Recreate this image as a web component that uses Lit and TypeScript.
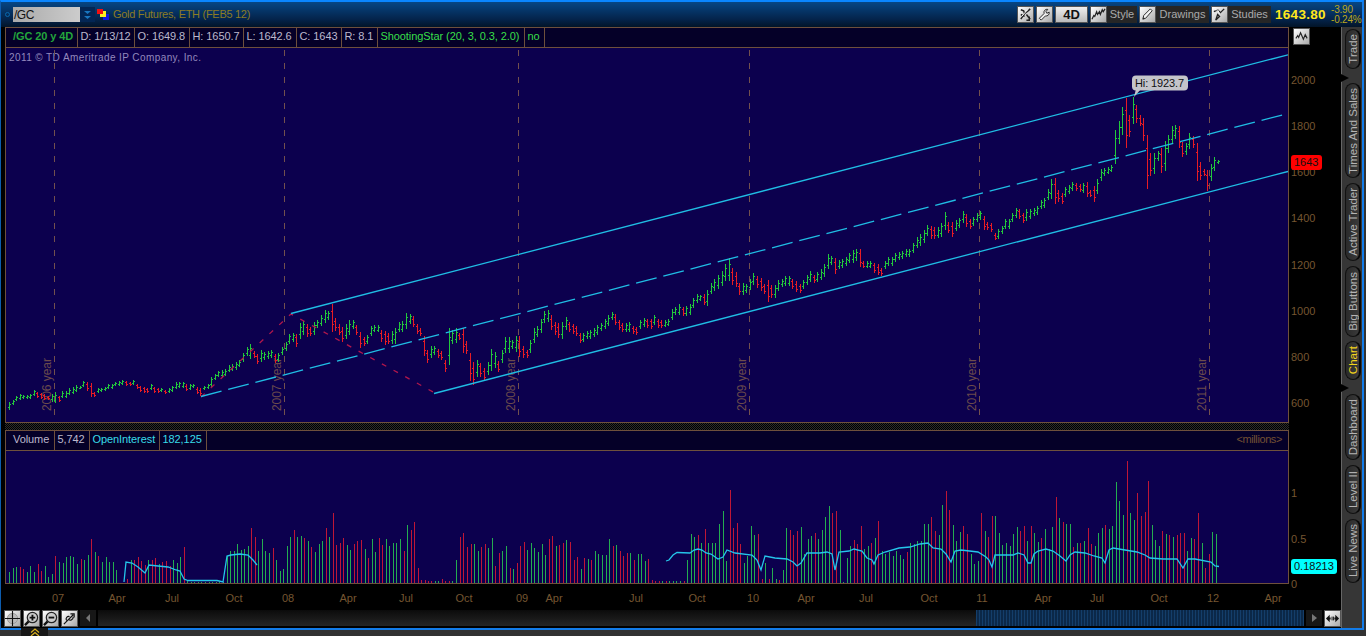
import { LitElement, html, css, svg } from 'lit';
import { customElement, property } from 'lit/decorators.js';

// price bars: x, high, low (chart pixels, y grows downwards)
const PRICES: number[][] = [
  [9,402,409],[12,400,404],[16,396,400],[20,394,399],[24,395,398],[31,394,398],[34,390,395],[38,392,397],[45,394,399],
  [49,396,399],[54,392,402],[57,399,404],[60,396,401],[64,391,397],[70,388,394],[75,385,391],[80,386,388],[85,381,386],
  [88,382,390],[91,383,396],[94,392,396],[97,388,392],[104,387,390],[110,384,388],[116,382,385],[122,380,384],[128,382,385],
  [132,380,384],[135,384,388],[140,386,391],[146,388,392],[150,384,389],[155,387,392],[160,388,391],[166,390,393],
  [172,386,391],[177,382,388],[181,382,387],[186,384,390],[192,384,387],[197,387,393],[200,388,395],[204,386,389],
  [208,384,388],[211,377,386],[214,374,379],[219,371,376],[224,369,375],[230,365,371],[235,362,369],[240,360,366],
  [244,353,361],[248,347,355],[251,344,358],[254,351,357],[257,354,363],[261,350,361],[265,352,359],[270,350,357],
  [274,354,362],[277,353,361],[281,347,354],[285,342,350],[289,334,343],[293,333,341],[297,334,346],[301,323,338],
  [304,321,334],[308,324,336],[312,327,335],[315,322,334],[319,320,327],[323,310,322],[327,311,319],[330,309,315],
  [332,304,331],[336,318,330],[340,324,334],[343,327,341],[348,320,334],[352,320,328],[355,325,334],[360,332,347],
  [364,337,345],[368,335,343],[371,326,335],[376,325,331],[380,330,341],[385,331,344],[389,333,343],[394,328,343],
  [397,322,330],[401,321,331],[404,319,329],[407,313,328],[410,314,323],[413,316,326],[417,324,333],[421,328,335],
  [424,336,355],[428,350,362],[432,346,357],[436,346,354],[440,351,359],[445,360,371],[449,328,364],[453,330,343],
  [457,328,342],[460,333,339],[463,328,352],[467,341,353],[471,353,380],[474,362,384],[478,360,376],[482,363,376],
  [485,368,380],[489,362,374],[492,349,370],[495,352,367],[499,361,371],[503,350,362],[507,337,352],[511,340,348],
  [514,335,346],[519,336,356],[523,346,357],[526,350,357],[529,340,352],[532,328,342],[537,326,336],[541,319,332],
  [545,311,322],[549,310,321],[552,315,329],[556,322,334],[559,323,337],[562,322,338],[566,317,329],[570,322,331],
  [575,326,335],[578,333,342],[582,333,341],[585,330,342],[588,331,338],[592,330,338],[597,325,334],[602,323,330],
  [607,315,325],[612,312,319],[616,314,324],[620,320,329],[624,323,331],[628,322,331],[632,326,333],[636,327,334],
  [640,320,328],[645,318,326],[650,319,328],[653,315,324],[657,319,327],[662,320,327],[668,319,325],[672,309,319],
  [676,307,314],[680,304,314],[684,307,315],[689,304,314],[692,298,307],[696,294,302],[701,295,300],[705,294,304],
  [708,290,305],[712,283,293],[716,279,290],[720,271,285],[725,264,280],[727,262,280],[730,258,280],[733,268,284],
  [737,272,286],[741,283,294],[745,284,292],[749,279,289],[754,273,284],[759,278,290],[763,284,293],[766,282,291],
  [769,280,301],[773,285,297],[778,280,290],[783,279,286],[787,276,285],[792,279,288],[797,281,291],[801,284,292],
  [806,275,284],[811,271,281],[815,275,282],[820,269,279],[825,264,276],[828,254,268],[832,256,264],[835,258,273],
  [840,260,268],[844,257,265],[849,253,262],[854,250,262],[858,249,260],[861,249,266],[865,261,267],[869,261,267],
  [873,263,272],[878,264,274],[881,268,275],[886,261,268],[890,257,265],[895,253,261],[900,252,259],[905,249,256],
  [908,249,256],[912,243,252],[917,237,247],[922,230,242],[926,225,235],[929,221,234],[932,226,238],[937,227,237],
  [941,223,236],[944,212,229],[948,222,232],[951,222,236],[954,220,230],[958,218,227],[961,211,222],[965,214,226],
  [969,219,228],[973,217,225],[977,213,221],[979,211,219],[982,216,229],[986,222,229],[990,223,231],[994,233,239],
  [999,229,238],[1003,226,233],[1007,219,228],[1012,213,221],[1017,208,217],[1021,209,218],[1024,213,222],[1028,209,220],
  [1032,208,215],[1036,206,214],[1040,200,208],[1044,198,207],[1048,189,199],[1052,179,198],[1055,178,203],[1059,190,201],
  [1063,193,203],[1067,187,196],[1072,182,190],[1076,183,190],[1080,184,191],[1085,183,192],[1088,182,196],[1091,190,196],
  [1094,186,201],[1098,179,193],[1102,169,180],[1106,168,175],[1110,165,171],[1113,153,169],[1116,130,163],[1120,121,143],
  [1124,107,134],[1127,98,147],[1130,115,136],[1133,97,123],[1137,105,122],[1141,115,125],[1144,118,140],[1147,135,188],
  [1151,153,175],[1155,153,173],[1159,151,160],[1163,148,172],[1166,141,170],[1169,135,152],[1172,126,143],[1176,125,138],
  [1179,126,147],[1183,142,156],[1187,143,154],[1190,133,148],[1194,136,147],[1197,143,180],[1201,162,179],[1205,169,175],
  [1209,170,190],[1211,164,180],[1215,157,170],[1218,160,163],
];

// runs of evenly spaced volume bars; a negative height is a down bar
const VOLUMES: { from: number; to: number; bars: number[] }[] = [
  { from: 9, to: 116.3, bars: [11,15,16,-16,-14,11,17,11,-19,-12,17,6,9,-27,21,20,26,27,26,19,-24,23,28,-44,31,-27,21,26,21,21,13] },
  { from: 127, to: 183.7, bars: [-4,23,-23,-26,-22,-18,23,-23,-25,19,-21,-22,-17,23,20,26,-36] },
  { from: 187, to: 223, bars: [2,1,1,1,1,1,1,1,1,1,1] },
  {
    from: 226.5, to: 421.2,
    bars: [27,32,32,39,33,34,37,-55,-46,32,44,32,30,-35,23,12,14,37,46,-53,46,47,-45,42,-36,31,39,42,-55,46,-70,-38,-40,-45,38,33,-39,
      -42,-43,34,-25,44,31,-45,-38,44,37,40,40,44,-32,58,-53,-61,-15,-3],
  },
  { from: 424.5, to: 452.2, bars: [-3,-2,-2,2,2,-4,-2,-2,2] },
  {
    from: 456.3, to: 637.5,
    bars: [23,-46,-50,-36,-39,39,32,-36,-39,35,45,-17,-30,32,37,-15,14,-20,-37,-41,33,40,35,31,39,28,-44,-47,37,-38,-40,43,-41,-23,
      -26,14,-25,24,-23,32,29,28,28,44,-37,38,-32,-27,-30,30,-23,29],
  },
  { from: 641, to: 651.8, bars: [29,22,-24,-3] },
  { from: 655, to: 683.5, bars: [-2,-2,2,-2,2,2,2,2,-2] },
  {
    from: 687.1, to: 836,
    bars: [23,49,46,-48,40,-54,40,40,40,59,72,22,-93,-55,-60,-39,20,27,57,48,-49,-4,20,-4,15,4,-3,13,55,-53,-48,-52,56,29,44,47,
      -50,44,53,66,77,-70,-72],
  },
  {
    from: 839.5, to: 945.6,
    bars: [53,1,25,37,-43,-39,-57,34,37,-40,45,-62,32,29,31,27,32,28,24,-31,40,39,42,42,59,59,-66,-52,48,78,-92],
  },
  {
    from: 949.3, to: 1126.5,
    bars: [-73,58,42,51,-57,-49,29,19,22,-70,52,-46,-67,67,50,38,40,37,49,56,-52,-57,42,-57,50,41,-45,54,34,56,-86,65,-61,59,59,-36,
      40,-40,42,-55,-39,37,50,55,-58,54,57,101,82,68,-122],
  },
  {
    from: 1130.3, to: 1215.8,
    bars: [70,63,-90,-67,-71,-102,58,43,37,-52,49,-48,46,-48,-50,-50,32,45,-44,-70,40,-15,-29,51,49],
  },
];

const OPEN_INTEREST = [
  '124,582 126,562 132,563 138,567 145,573 149,565 158,566 168,567 176,570 180,571 184,579 188,580.5 217,580.5 223,582 227,556 231,555 240,554 248,555 253,560 257,565',
  '666,561 669,560 673,555 677,552.5 690,553 694,550 698,549 702,550 706,553 711,554 718,559 723,557 727,550 735,553 752,555 757,560 761,570 765,556 775,558 787,559 793,562 797,566 801,563 807,553 820,553 827,552 832,554 835,570 839,552 849,551 854,549 862,551 867,558 872,560 874,564 878,555 885,552 899,548 910,547 920,544 928,543 933,548 941,549 946,554 951,562 955,551 961,550 978,552 986,557 989,560 992,567 995,555 1013,555 1018,553 1024,555 1028,563 1031,563 1034,554 1038,551 1046,549 1053,551 1060,556 1066,561 1070,555 1075,552 1085,553 1094,556 1102,558 1105,563 1109,550 1113,548 1125,550 1137,552 1145,555 1150,558 1163,559 1177,559 1183,568 1188,559 1195,559 1211,562 1215,566 1219,566.5',
];

const YEARS: [number, string][] = [[54, '2006'], [284, '2007'], [518, '2008'], [749, '2009'], [979, '2010'], [1209, '2011']];

const DATES: [number, string][] = [
  [58, '07'], [117, 'Apr'], [172, 'Jul'], [234, 'Oct'], [288, '08'], [348, 'Apr'], [406, 'Jul'], [464, 'Oct'], [522, '09'],
  [554, 'Apr'], [636, 'Jul'], [697, 'Oct'], [753, '10'], [806, 'Apr'], [866, 'Jul'], [929, 'Oct'], [982, '11'], [1043, 'Apr'],
  [1097, 'Jul'], [1159, 'Oct'], [1213, '12'], [1273, 'Apr'],
];

const UP = '#22c83c';
const DOWN = '#e81c24';
const STEP = 3.545;

// puts the series on an even grid: the nearest point if there is one, else in between
function spreadBars(points: number[][]) {
  const out: number[][] = [];
  for (let x = points[0][0]; x <= 1219; x += STEP) {
    const near = points.reduce((a, b) => (Math.abs(b[0] - x) < Math.abs(a[0] - x) ? b : a));
    let [, hi, lo] = near;
    if (Math.abs(near[0] - x) > 1.9) {
      const next = points.find((p) => p[0] > x) ?? near;
      const prev = points[Math.max(0, points.indexOf(next) - 1)];
      hi = Math.round((prev[1] + next[1]) / 2);
      lo = Math.round((prev[2] + next[2]) / 2);
    }
    out.push([Math.round(x), hi, lo]);
  }
  return out;
}

const ICONS = {
  study: svg`<path d="M3 3l3 1 1 3 4-3 2-2M3 8l4 2M7 7L3 13M9 8l4 5M12 10v4H9" fill="none" stroke="#222" stroke-width="1.6"/><path d="M4 10l6-7" stroke="#fff"/>`,
  wrench: svg`<path d="M2.5 12l5-5c-.7-3 1.5-5 4-4.500L9.500 5l1 1.700L13 5.500c.5 3-2 4.500-4 4L4.500 14z" fill="#eee" stroke="#222"/>`,
  style: svg`<path d="M1 13l2-4 1 1 2-5 1 3 2-3 1 3 2-5 1 2 2-3" fill="none" stroke="#222" stroke-width="1.300"/>`,
  pencil: svg`<path d="M3 13l1-4 7-7 2 2-7 8z" fill="#f4f4f4" stroke="#222"/><path d="M3 13l2-1-1-1z" fill="#111"/>`,
  brush: svg`<path d="M2 5l4-2 3 3 4-4M6 8l2 2-4 4z" fill="none" stroke="#222" stroke-width="1.500"/><path d="M3 3h3l2 4" stroke="#fff" fill="none"/>`,
  wave: svg`<path d="M2 10l2-3 1 2 2-5 3 7 2-5 2 4" fill="none" stroke="#222" stroke-width="1.200"/>`,
  cross: svg`<circle cx="8" cy="8" r="5.500" fill="#bbb" stroke="#999"/><path d="M8 0v16M0 8h16" stroke="#111" stroke-width="1.200"/>`,
  zoomIn: svg`<path d="M1 15l4-4" stroke="#111" stroke-width="2.500"/><circle cx="9" cy="7" r="5.500" fill="#ccc" stroke="#222" stroke-width="1.300"/><path d="M9 4v6M6 7h6" stroke="#111" stroke-width="2"/>`,
  zoomOut: svg`<path d="M1 15l4-4" stroke="#111" stroke-width="2.500"/><circle cx="9" cy="7" r="5.500" fill="#ccc" stroke="#222" stroke-width="1.300"/><path d="M6 7h6" stroke="#111" stroke-width="2"/>`,
  cursor: svg`<path d="M2 14L12 4M5 10c-2-2 1-5 3-4M7 9c2 2 5 0 5-3M9 3h4v4" fill="none" stroke="#111" stroke-width="1.200"/>`,
  fit: svg`<path d="M1 8l4-4v3h1v2H5v3zM15 8l-4-4v3h-1v2h1v3z" fill="#111"/><path d="M7.500 6v4M9 6v4" stroke="#111"/>`,
};

@customElement('tool-icon')
export class ToolIcon extends LitElement {
  @property() name: keyof typeof ICONS = 'study';

  static styles = css`
    :host {
      display: block;
      box-sizing: border-box;
      width: 17px;
      height: 17px;
      flex: none;
      border: 1px solid #555;
      background: linear-gradient(135deg, #fff, #aaa);
    }
    .glyph {
      display: block;
      width: 15px;
      height: 15px;
    }
  `;

  render() {
    return html`<svg class="glyph" viewBox="0 0 16 16">${ICONS[this.name]}</svg>`;
  }
}

@customElement('price-chart')
export class PriceChart extends LitElement {
  static styles = css`
    :host {
      display: block;
    }
    .plot {
      display: block;
      width: 1282px;
      height: 374px;
      background: #0c004e;
      font: 11px 'Liberation Sans', Arial, sans-serif;
    }
    .note {
      font-size: 10px;
      fill: #9389bd;
    }
    .year {
      font-size: 12px;
      fill: #6b4b4c;
    }
    .tip {
      fill: #101010;
    }
    .crisp {
      shape-rendering: crispEdges;
    }
  `;

  renderBar(p: number[], prev?: number[]) {
    const [x, hi, lo] = p;
    const up = prev ? hi + lo <= prev[1] + prev[2] : true;
    const inset = (lo - hi) * 0.25;
    const left = Math.round(up ? lo - inset : hi + inset);
    const right = Math.round(up ? hi + inset : lo - inset);
    return svg`<path d="M${x + 0.5} ${hi}V${lo + 1}M${x - 1} ${left + 0.5}h1M${x + 1} ${right + 0.5}h1" stroke=${up ? UP : DOWN} />`;
  }

  render() {
    const bars = spreadBars(PRICES);
    return html`
      <svg class="plot" viewBox="6 48 1282 374">
        <text class="note" x="9" y="61" textLength="192">2011 © TD Ameritrade IP Company, Inc.</text>
        ${YEARS.map(([x, y]) => svg`
          <path class="crisp" d="M${x + 0.5} 50V418" stroke="#72504e" stroke-dasharray="6 7.300" />
          <text class="year" transform="translate(${x - 3} 411) rotate(-90)" textLength="53">${y} year</text>
        `)}
        <g class="crisp">${bars.map((p, i) => this.renderBar(p, bars[i - 1]))}</g>
        <path d="M201 397L291 314L435 393" fill="none" stroke="#b3164c" stroke-width="1.300" stroke-dasharray="5 8.300" />
        <g stroke="#20bde4" stroke-width="1.300">
          <path d="M291 313.500L1288 54.800" />
          <path d="M201 396.500L1288 113.500" stroke-dasharray="21.200 6.900" />
          <path d="M434 393.500L1288 171.500" />
        </g>
        <path d="M1134 97l2-8h5z" fill="#c4c4ca" />
        <rect x="1132" y="75.500" width="56" height="15" rx="4" fill="#c4c4ca" />
        <text class="tip" x="1135" y="87" textLength="49">Hi: 1923.7</text>
      </svg>
    `;
  }
}

@customElement('volume-chart')
export class VolumeChart extends LitElement {
  static styles = css`
    :host {
      display: block;
    }
    .plot {
      display: block;
      width: 1282px;
      height: 132px;
      background: #0c004e;
    }
    .crisp {
      shape-rendering: crispEdges;
    }
  `;

  render() {
    return html`
      <svg class="plot" viewBox="6 451 1282 132">
        <g class="crisp">
          ${VOLUMES.map(({ from, to, bars }) => bars.map((v, i) => {
            const x = Math.round(from + ((to - from) * i) / (bars.length - 1));
            return svg`<path d="M${x + 0.5} 583v${-Math.abs(v)}" stroke=${v > 0 ? '#24ad50' : '#bf1636'} />`;
          }))}
        </g>
        ${OPEN_INTEREST.map((p) => svg`<polyline points=${p} fill="none" stroke="#25c5ea" stroke-width="1.300" />`)}
      </svg>
    `;
  }
}

@customElement('side-tabs')
export class SideTabs extends LitElement {
  // label, height, gap above
  tabs: [string, number, number][] = [
    ['Trade', 40, 2], ['Times And Sales', 95, 14], ['Active Trader', 78, 5], ['Big Buttons', 71, 5],
    ['Chart', 39, 4], ['Dashboard', 66, 14], ['Level II', 49, 5], ['Live News', 64, 5],
  ];

  static styles = css`
    :host {
      display: block;
      box-sizing: border-box;
      width: 21px;
      border-left: 1px solid #666;
      background: #363636;
      position: relative;
      font: 11.500px 'Liberation Sans', Arial, sans-serif;
    }
    .tab {
      display: flex;
      align-items: center;
      justify-content: center;
      box-sizing: border-box;
      width: 16px;
      margin-left: 3px;
      border: 1px solid #111;
      border-right: 2px solid #080808;
      border-radius: 8px;
      background: linear-gradient(90deg, #2a2a2a, #3a3a3a);
      color: #b4b4b4;
    }
    .tab.active {
      color: #f2d41c;
    }
    .label {
      writing-mode: vertical-rl;
      transform: rotate(180deg);
      white-space: nowrap;
    }
    .notch {
      position: absolute;
      left: -1px;
      border: 4px solid transparent;
      border-left: 8px solid #000;
      border-right: 0;
    }
    .notch.upper {
      top: 47px;
    }
    .notch.lower {
      top: 357px;
    }
  `;

  render() {
    return html`
      ${this.tabs.map(([label, height, gap]) => html`
        <div class="tab ${label === 'Chart' ? 'active' : ''}" style="height:${height}px;margin-top:${gap}px">
          <span class="label">${label}</span>
        </div>
      `)}
      <i class="notch upper"></i>
      <i class="notch lower"></i>
    `;
  }
}

@customElement('app-root')
export class AppRoot extends LitElement {
  static styles = css`
    :host {
      display: block;
      width: 1366px;
      height: 636px;
      overflow: hidden;
      background: #323232;
      font: 11px/13px 'Liberation Sans', Arial, sans-serif;
      color: #bcb8cc;
    }
    .window {
      box-sizing: border-box;
      width: 1364px;
      height: 630px;
      border: 2px solid #127be8;
      border-left: 1px solid #0d5cae;
      border-top-color: #0a86ff;
      background: #000;
    }
    .toolbar {
      display: flex;
      align-items: center;
      height: 25px;
      padding-left: 4px;
      background: linear-gradient(#064684, #04234a 70%, #021428);
    }
    .ring {
      width: 3px;
      height: 3px;
      border: 1px solid #0968ae;
      border-radius: 50%;
      margin-right: 3px;
    }
    .symbol {
      width: 66px;
      height: 15px;
      line-height: 16px;
      font-size: 12px;
      letter-spacing: -0.500px;
      color: #111;
      background: linear-gradient(90deg, #aaa, #ccc);
      padding-left: 1px;
    }
    .drop {
      display: block;
      width: 15px;
      height: 15px;
      background: #032654;
    }
    .flag {
      width: 13px;
      height: 13px;
      margin: 0 3px 0 2px;
    }
    .title {
      color: #8c7c24;
      letter-spacing: -0.290px;
      flex: 1;
    }
    .tools {
      display: flex;
      gap: 2px;
      width: 258px;
    }
    .tool {
      display: flex;
      height: 17px;
      line-height: 17px;
      background: #262626;
      color: #aaa;
    }
    .tool span {
      flex: 1;
      text-align: center;
    }
    .tool.aggregation {
      box-sizing: border-box;
      width: 33px;
      border: 1px solid #555;
      background: linear-gradient(#eee, #bbb);
      color: #111;
      font-size: 13px;
      font-weight: bold;
      line-height: 16px;
    }
    .tool.style {
      width: 47px;
    }
    .tool.drawings {
      width: 70px;
    }
    .tool.studies {
      width: 60px;
    }
    .last {
      width: 56px;
      color: #ffe81c;
      font-size: 13.500px;
      font-weight: bold;
      letter-spacing: 0.300px;
    }
    .change {
      width: 31px;
      color: #bca71c;
      font-size: 10px;
      line-height: 10px;
      letter-spacing: -0.200px;
      white-space: pre;
    }
    .body {
      display: flex;
      height: 601px;
    }
    .left {
      display: flex;
      flex-direction: column;
      flex: 1;
    }
    .panels {
      display: flex;
      height: 557px;
      padding-left: 4px;
    }
    .charts {
      width: 1284px;
    }
    .panel {
      box-sizing: border-box;
      border: 1px solid #6e503c;
    }
    .splitter {
      height: 7px;
      background: repeating-conic-gradient(#2b2b2b 0 25%, #000 0 50%) 0 0 / 2px 2px;
    }
    .header {
      display: flex;
      box-sizing: border-box;
      height: 20px;
      border-bottom: 1px solid #6e503c;
      background: #050028;
      line-height: 17px;
    }
    .cell {
      box-sizing: border-box;
      border-right: 1px solid #6e503c;
      padding-left: 2.500px;
      letter-spacing: -0.080px;
      white-space: nowrap;
    }
    .cell.name {
      padding-left: 7px;
      color: #23a53c;
      font-weight: bold;
      letter-spacing: -0.100px;
    }
    .cell.green {
      color: #38df48;
    }
    .cell.cyan {
      color: #38dbe8;
    }
    .cell.lead {
      padding-left: 7px;
    }
    .millions {
      margin-left: auto;
      padding-right: 6px;
      letter-spacing: -0.400px;
      color: #735033;
    }
    .axis {
      flex: 1;
      position: relative;
      color: #755631;
    }
    .axis tool-icon {
      margin: 1px 0 0 4px;
    }
    .scale {
      display: grid;
      grid-auto-rows: 46.150px;
      padding: 29px 0 0 2px;
    }
    .scale.volume {
      grid-auto-rows: 45.500px;
      padding-top: 44px;
    }
    .tag {
      position: absolute;
      left: 2px;
      height: 15px;
      line-height: 15px;
      border-radius: 3px;
      color: #111;
      box-sizing: border-box;
      padding-left: 3px;
    }
    .tag.price {
      top: 128px;
      width: 31px;
      background: #ff0000;
    }
    .tag.interest {
      top: 532px;
      width: 46px;
      background: #00ffff;
    }
    .dates {
      display: block;
      width: 1340px;
      height: 24px;
    }
    .date {
      fill: #755631;
      text-anchor: middle;
    }
    .scrollbar {
      display: flex;
      align-items: center;
      height: 20px;
      padding-left: 3px;
      gap: 2px;
    }
    .track {
      display: flex;
      flex: 1;
      height: 16px;
      background: linear-gradient(#0b0b0b, #252525);
    }
    .thumb {
      width: 328px;
      margin-left: auto;
      background: repeating-linear-gradient(90deg, #143e6a 0 1px, #0b2848 1px 3px);
    }
    .arrow {
      width: 16px;
      height: 16px;
      background: #171717;
    }
    .footer {
      width: 27px;
      height: 8px;
      margin-left: 21px;
      margin-top: -2px;
      position: relative;
      background: #171717;
    }
    .chevrons {
      display: block;
      margin: auto;
    }
  `;

  headers: [string, number, string][] = [
    ['/GC 20 y 4D', 72, 'name'], ['D: 1/13/12', 57, ''], ['O: 1649.8', 55, ''], ['H: 1650.7', 54, ''],
    ['L: 1642.6', 53, ''], ['C: 1643', 45, ''], ['R: 8.1', 36, ''], ['ShootingStar (20, 3, 0.3, 2.0)', 147, 'green'], ['no', 20, 'green'],
  ];

  volumeHeaders: [string, number, string][] = [
    ['Volume', 49, 'lead'], ['5,742', 35, ''], ['OpenInterest', 70, 'cyan'], ['182,125', 47, 'cyan'],
  ];

  renderCells(cells: [string, number, string][]) {
    return cells.map(([text, width, kind]) => html`<div class="cell ${kind}" style="width:${width}px">${text}</div>`);
  }

  render() {
    return html`
      <div class="window">
        <div class="toolbar">
          <i class="ring"></i>
          <div class="symbol">/GC</div>
          <svg class="drop" viewBox="0 0 15 15"><path d="M4 4h7l-3.500 3zM4 9h7l-3.500 3z" fill="#1976bf" /></svg>
          <svg class="flag" viewBox="0 0 13 13">
            <path d="M6 6h6v6H6z" fill="#1018e0" /><path d="M3 3h6v6H3z" fill="#fff020" /><path d="M0 1h6v5H0z" fill="#f01010" />
          </svg>
          <div class="title">Gold Futures, ETH (FEB5 12)</div>
          <div class="tools">
            <tool-icon name="study"></tool-icon>
            <tool-icon name="wrench"></tool-icon>
            <div class="tool aggregation"><span>4D</span></div>
            <div class="tool style"><tool-icon name="style"></tool-icon><span>Style</span></div>
            <div class="tool drawings"><tool-icon name="pencil"></tool-icon><span>Drawings</span></div>
            <div class="tool studies"><tool-icon name="brush"></tool-icon><span>Studies</span></div>
          </div>
          <div class="last">1643.80</div>
          <div class="change">-3.90<br />-0.24%</div>
        </div>
        <div class="body">
          <div class="left">
            <div class="panels">
              <div class="charts">
                <div class="panel">
                  <div class="header">${this.renderCells(this.headers)}</div>
                  <price-chart></price-chart>
                </div>
                <div class="splitter"></div>
                <div class="panel">
                  <div class="header">
                    ${this.renderCells(this.volumeHeaders)}
                    <div class="millions">&lt;millions&gt;</div>
                  </div>
                  <volume-chart></volume-chart>
                </div>
              </div>
              <div class="axis">
                <tool-icon name="wave"></tool-icon>
                <div class="scale">
                  ${[2000, 1800, 1600, 1400, 1200, 1000, 800, 600].map((v) => html`<div>${v}</div>`)}
                </div>
                <div class="scale volume">
                  ${['1', '0.5', '0'].map((v) => html`<div>${v}</div>`)}
                </div>
                <div class="tag price">1643</div>
                <div class="tag interest">0.18213</div>
              </div>
            </div>
            <svg class="dates" viewBox="1 584 1340 24">
              ${DATES.map(([x, label]) => svg`<text class="date" x=${x} y="602">${label}</text>`)}
            </svg>
            <div class="scrollbar">
              <tool-icon name="cross"></tool-icon>
              <tool-icon name="zoomIn"></tool-icon>
              <tool-icon name="zoomOut"></tool-icon>
              <tool-icon name="cursor"></tool-icon>
              <svg class="arrow" viewBox="0 0 16 16"><path d="M10 4v8L6 8z" fill="#777" /></svg>
              <div class="track"><div class="thumb"></div></div>
              <svg class="arrow" viewBox="0 0 16 16"><path d="M6 4v8l5-4z" fill="#777" /></svg>
              <tool-icon name="fit"></tool-icon>
            </div>
          </div>
          <side-tabs></side-tabs>
        </div>
      </div>
      <div class="footer">
        <svg class="chevrons" width="10" height="8" viewBox="0 0 10 8">
          <path d="M1 4.500l4-3.500 4 3.500M1 8l4-3.500L9 8" fill="none" stroke="#d8b020" stroke-width="1.200" />
        </svg>
      </div>
    `;
  }
}
